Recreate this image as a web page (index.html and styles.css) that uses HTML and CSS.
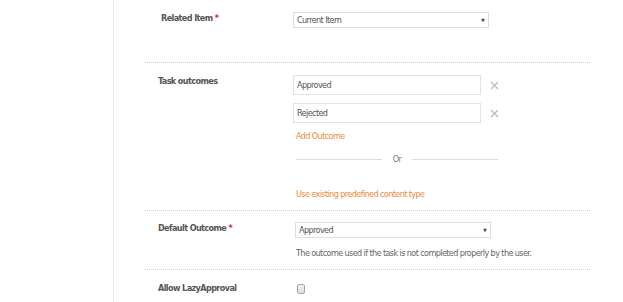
FILE: index.html
```html
<!DOCTYPE html>
<html lang="en">

<head>
    <meta charset="UTF-8" />
    <title>Task Settings</title>
    <meta name="viewport" content="width=device-width, initial-scale=1.0" />
    <link rel="stylesheet" href="styles.css">
</head>

<body>
    <div class="panel">
        <div class="form-row row-related">
            <div class="label label-shift">Related Item <span class="req">*</span></div>
            <div class="field">
                <div class="select">
                    <span>Current Item</span>
                    <span class="caret">&#9660;</span>
                </div>
            </div>
        </div>

        <div class="form-row row-outcomes">
            <div class="label">Task outcomes</div>
            <div class="field">
                <div class="outcome">
                    <div class="text-input">Approved</div>
                    <svg class="remove" width="9" height="9" viewBox="0 0 9 9" aria-label="Remove">
                        <path d="M1 1 L8 8 M8 1 L1 8" stroke="#b8b8b8" stroke-width="1.1" fill="none" />
                    </svg>
                </div>
                <div class="outcome">
                    <div class="text-input">Rejected</div>
                    <svg class="remove" width="9" height="9" viewBox="0 0 9 9" aria-label="Remove">
                        <path d="M1 1 L8 8 M8 1 L1 8" stroke="#b8b8b8" stroke-width="1.1" fill="none" />
                    </svg>
                </div>
                <a class="link add-link">Add Outcome</a>
                <div class="or-divider">
                    <span class="or-line"></span>
                    <span class="or-text">Or</span>
                    <span class="or-line"></span>
                </div>
                <a class="link predefined-link">Use existing predefined content type</a>
            </div>
        </div>

        <div class="form-row row-default">
            <div class="label">Default Outcome <span class="req">*</span></div>
            <div class="field field-shift">
                <div class="select">
                    <span>Approved</span>
                    <span class="caret">&#9660;</span>
                </div>
                <div class="help">The outcome used if the task is not completed properly by the user.</div>
            </div>
        </div>

        <div class="form-row row-lazy">
            <div class="label">Allow LazyApproval</div>
            <div class="field field-shift">
                <span class="checkbox"></span>
            </div>
        </div>
    </div>
</body>

</html>
```

FILE: styles.css
```css
body {
    margin: 0;
    background: #fff;
    font-family: "DejaVu Sans Condensed", "Liberation Sans", sans-serif;
    font-size: 9px;
    letter-spacing: -0.6px;
    color: #555;
}

.panel {
    margin-left: 113px;
    min-height: 302px;
    border-left: 1px solid #eeeeee;
    padding: 0 33px 0 31px;
}

.form-row {
    display: grid;
    grid-template-columns: 135px 1fr;
    padding-left: 13px;
    border-bottom: 1px dotted #cfcfcf;
}

.row-related {
    padding-top: 12px;
    padding-bottom: 34px;
}

.row-outcomes {
    padding-top: 12px;
    padding-bottom: 10px;
}

.row-default {
    padding-top: 11px;
    padding-bottom: 10px;
}

.row-lazy {
    padding-top: 12px;
    border-bottom: none;
}

.label {
    font-weight: bold;
    font-size: 9px;
    color: #555;
    line-height: 12px;
}

.label-shift {
    padding-left: 3px;
}

.req {
    color: #d9262e;
}

.field {
    display: flex;
    flex-direction: column;
    align-items: flex-start;
}

.field-shift {
    padding-left: 2px;
}

.select {
    box-sizing: border-box;
    width: 196px;
    height: 16px;
    border: 1px solid #dedede;
    display: flex;
    align-items: center;
    justify-content: space-between;
    padding: 0 4px 0 3px;
    color: #555;
    line-height: 14px;
}

.caret {
    font-size: 5px;
    color: #444;
}

.outcome {
    display: flex;
    align-items: center;
    gap: 9px;
    margin-bottom: 8px;
}

.text-input {
    box-sizing: border-box;
    width: 188px;
    height: 20px;
    border: 1px solid #e2e2e2;
    padding: 0 3px;
    line-height: 18px;
    color: #555;
}

.remove {
    display: block;
}

.link {
    color: #ee8a3c;
    line-height: 12px;
    padding-left: 3px;
    cursor: pointer;
}

.add-link {
    margin-top: -1px;
}

.or-divider {
    display: flex;
    align-items: center;
    width: 202px;
    margin: 11px 0 0 3px;
    line-height: 12px;
}

.or-line {
    flex: 1;
    height: 1px;
    background: #dcdcdc;
}

.or-text {
    margin: 0 11px;
    color: #777;
}

.predefined-link {
    margin-top: 23px;
}

.help {
    margin-top: 9px;
    line-height: 12px;
    padding-left: 1px;
    color: #666;
}

.checkbox {
    display: block;
    width: 6px;
    height: 8px;
    margin: 2px 0 0 2px;
    border: 1px solid #a8a8a8;
    border-radius: 2px;
    background: linear-gradient(#f4f4f4, #dcdcdc);
}
```
